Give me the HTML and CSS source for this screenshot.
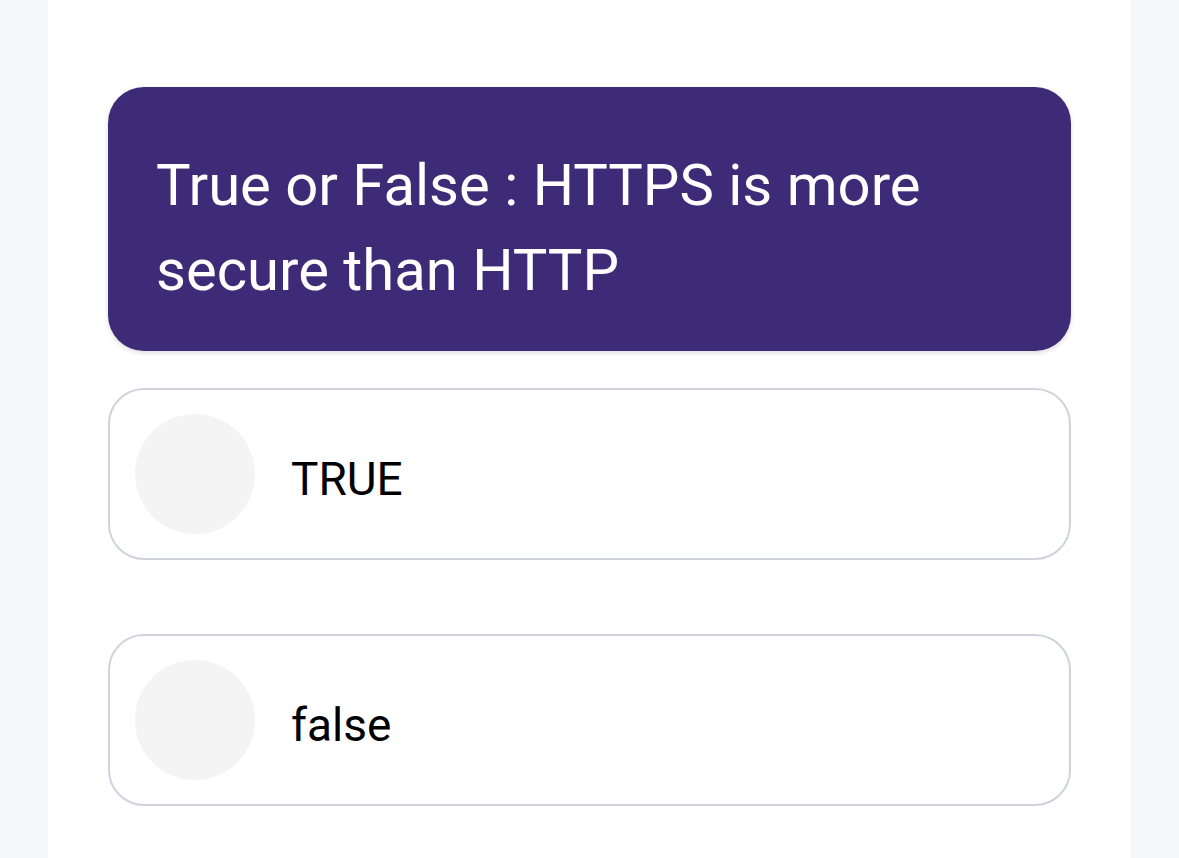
FILE: index.html
```html
<!DOCTYPE html>
<html lang="en">

<head>
    <meta charset="UTF-8">
    <meta name="viewport" content="width=device-width, initial-scale=1.0">
    <title>Quiz</title>
    <link rel="stylesheet" href="styles.css">
</head>

<body>
    <div class="panel">
        <div class="question-card">
            <p>True or False : HTTPS is more secure than HTTP</p>
        </div>

        <div class="options">
            <div class="option">
                <span class="bubble"></span>
                <span class="label">TRUE</span>
            </div>
            <div class="option">
                <span class="bubble"></span>
                <span class="label">false</span>
            </div>
        </div>
    </div>
</body>

</html>
```

FILE: styles.css
```css
body {
    margin: 0;
    background: #f6f7f9;
    font-family: Roboto, "Noto Sans", sans-serif;
}

.panel {
    width: 1083px;
    margin-left: 48px;
    min-height: 858px;
    background: white;
    padding: 87px 60px 0;
    box-sizing: border-box;
}

.question-card {
    background: #3e2b78;
    color: white;
    border-radius: 36px;
    padding: 18px 48px 0;
    height: 264px;
    box-sizing: border-box;
    display: flex;
    align-items: center;
    box-shadow: 0 2px 5px rgba(0, 0, 0, 0.14);
}

.question-card p {
    margin: 0;
    font-size: 58px;
    line-height: 85px;
    max-width: 820px;
}

.options {
    margin-top: 37px;
    display: flex;
    flex-direction: column;
    gap: 74px;
}

.option {
    display: flex;
    align-items: center;
    gap: 36px;
    height: 172px;
    box-sizing: border-box;
    border: 2px solid #cfd3dc;
    border-radius: 36px;
    padding: 0 25px;
}

.bubble {
    width: 120px;
    height: 120px;
    border-radius: 50%;
    background: #f4f4f4;
    flex-shrink: 0;
}

.label {
    font-size: 46px;
    color: black;
    padding-top: 10px;
}
```
